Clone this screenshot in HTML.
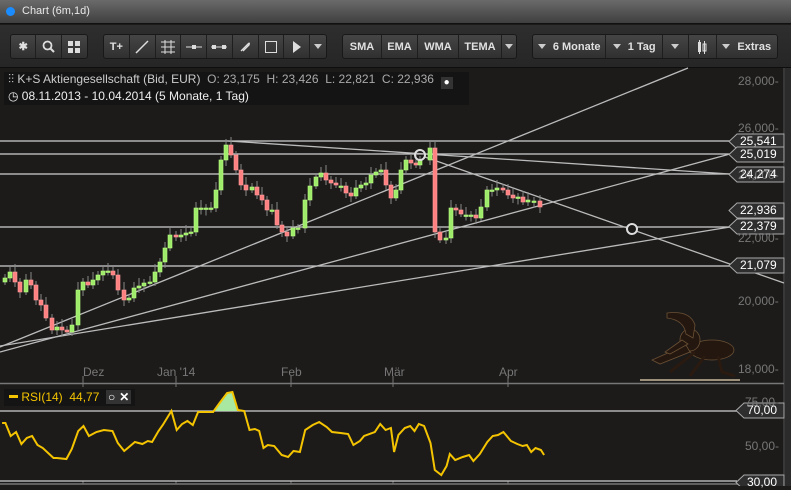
<!DOCTYPE html>
<html><head><meta charset="utf-8"><style>
*{margin:0;padding:0;box-sizing:border-box}
body{width:791px;height:486px;overflow:hidden;background:#1c1b1a;font-family:"Liberation Sans",Arial,sans-serif;position:relative}
#title{position:absolute;left:0;top:0;width:791px;height:24px;background:linear-gradient(#6a6a6a,#3f3f3f);border-bottom:1px solid #111}
#title .dot{position:absolute;left:6px;top:7px;width:9px;height:9px;border-radius:50%;background:#1a8cff}
#title .t{position:absolute;left:22px;top:5px;font-size:11px;color:#e8e8e8}
#tb{position:absolute;left:0;top:25px;width:791px;height:43px;background:linear-gradient(#2e2e2e,#262626);border-bottom:1px solid #0e0e0e}
.g{position:absolute;top:9px;height:25px;border:1px solid #181818;border-radius:3px;background:linear-gradient(#454545,#303030);display:flex}
.b{height:100%;border-right:1px solid #1e1e1e;color:#e0e0e0;font-size:11px;font-weight:bold;display:flex;align-items:center;justify-content:center}
.b:last-child{border-right:none}
.ar{display:inline-block;width:0;height:0;border-left:4px solid transparent;border-right:4px solid transparent;border-top:5px solid #ccc;margin-right:7px}
#info{position:absolute;left:4px;top:72px;height:33px;width:465px;background:#141414}
.l1{position:absolute;left:8px;top:72px;font-size:12px;color:#aaa;white-space:nowrap}
.l2{position:absolute;left:8px;top:89px;font-size:12px;color:#eee;white-space:nowrap}
.ax{position:absolute;font-size:12px;color:#777}
.lb{position:absolute;left:739px;width:46px;height:15px;color:#fff;font-size:12px;line-height:15px;padding-left:1px}
#rsil{position:absolute;left:4px;top:389px;width:131px;height:17px;background:#141414;font-size:12px;color:#f5c400;line-height:16px;padding-left:5px}
</style></head><body>
<div id="title"><div class="dot"></div><div class="t">Chart (6m,1d)</div></div>
<div id="tb">
 <div class="g" style="left:10px;width:78px">
  <div class="b" style="width:26px">✱</div>
  <div class="b" style="width:26px"><svg width="13" height="13"><circle cx="5.5" cy="5.5" r="4" stroke="#ddd" stroke-width="1.8" fill="none"/><line x1="8.5" y1="8.5" x2="12" y2="12" stroke="#ddd" stroke-width="2"/></svg></div>
  <div class="b" style="width:26px"><svg width="12" height="12"><rect x="0" y="0" width="5" height="5" fill="#ddd"/><rect x="7" y="0" width="5" height="5" fill="#ddd"/><rect x="0" y="7" width="5" height="5" fill="#ddd"/><rect x="7" y="7" width="5" height="5" fill="#ddd"/></svg></div>
 </div>
 <div class="g" style="left:103px;width:224px">
  <div class="b" style="width:26px">T+</div>
  <div class="b" style="width:26px"><svg width="14" height="14"><line x1="1" y1="13" x2="13" y2="1" stroke="#ddd" stroke-width="1.5"/></svg></div>
  <div class="b" style="width:26px"><svg width="14" height="14" stroke="#ddd"><line x1="0" y1="2" x2="14" y2="2"/><line x1="0" y1="7" x2="14" y2="7"/><line x1="0" y1="12" x2="14" y2="12"/><line x1="4" y1="0" x2="4" y2="14"/><line x1="10" y1="0" x2="10" y2="14"/></svg></div>
  <div class="b" style="width:26px"><svg width="16" height="6"><line x1="0" y1="3" x2="16" y2="3" stroke="#ddd"/><rect x="6" y="1" width="4" height="4" fill="#ddd"/></svg></div>
  <div class="b" style="width:26px"><svg width="16" height="6"><line x1="0" y1="3" x2="16" y2="3" stroke="#ddd"/><rect x="1" y="1" width="4" height="4" fill="#ddd"/><rect x="11" y="1" width="4" height="4" fill="#ddd"/></svg></div>
  <div class="b" style="width:26px"><svg width="12" height="12"><path d="M2 10 L9 3 Q11 1 10 4 L4 10" stroke="#ddd" fill="none" stroke-width="1.3"/></svg></div>
  <div class="b" style="width:26px"><svg width="12" height="12"><rect x="0.5" y="0.5" width="11" height="11" stroke="#ddd" fill="none"/></svg></div>
  <div class="b" style="width:26px"><svg width="8" height="12"><path d="M0 0 L8 6 L0 12Z" fill="#ddd"/></svg></div>
  <div class="b" style="width:16px"><span class="ar" style="margin:0"></span></div>
 </div>
 <div class="g" style="left:342px;width:175px">
  <div class="b" style="width:39px">SMA</div><div class="b" style="width:36px">EMA</div><div class="b" style="width:41px">WMA</div><div class="b" style="width:43px">TEMA</div><div class="b" style="width:14px"><span class="ar" style="margin:0"></span></div>
 </div>
 <div class="g" style="left:532px;width:246px">
  <div class="b" style="width:74px"><span class="ar"></span>6 Monate</div>
  <div class="b" style="width:57px"><span class="ar"></span>1 Tag</div>
  <div class="b" style="width:26px"><span class="ar" style="margin:0"></span></div>
  <div class="b" style="width:28px"><svg width="10" height="14" fill="#ddd"><rect x="1" y="2" width="3" height="10"/><line x1="2.5" y1="0" x2="2.5" y2="14" stroke="#ddd"/><rect x="6" y="4" width="3" height="7" fill="none" stroke="#ddd"/><line x1="7.5" y1="1" x2="7.5" y2="14" stroke="#ddd"/></svg></div>
  <div class="b" style="width:61px"><span class="ar"></span>Extras</div>
 </div>
</div>
<svg id="ch" width="791" height="486" style="position:absolute;left:0;top:0"></svg>
<div id="info"></div>
<div class="l1"><span style="color:#ccc">⫶⫶</span> <span style="color:#ccc">K+S Aktiengesellschaft (Bid, EUR)</span>&nbsp; O: 23,175&nbsp; H: 23,426&nbsp; L: 22,821&nbsp; C: 22,936 &nbsp;<span style="display:inline-block;width:12px;height:12px;background:#333;vertical-align:-2px;text-align:center;line-height:12px;color:#fff;font-size:10px">●</span></div>
<div class="l2">◷ 08.11.2013 - 10.04.2014 (5 Monate, 1 Tag)</div>
<div class="ax" style="left:738px;top:74px">28,000-</div>
<div class="ax" style="left:738px;top:121px">26,000-</div>
<div class="ax" style="left:738px;top:168px">24,000-</div>
<div class="ax" style="left:738px;top:231px">22,000-</div>
<div class="ax" style="left:738px;top:294px">20,000-</div>
<div class="ax" style="left:738px;top:362px">18,000-</div>
<div class="ax" style="left:745px;top:395px">75,00-</div>
<div class="ax" style="left:745px;top:439px">50,00-</div>
<div class="ax" style="left:83px;top:365px">Dez</div>
<div class="ax" style="left:157px;top:365px">Jan '14</div>
<div class="ax" style="left:281px;top:365px">Feb</div>
<div class="ax" style="left:384px;top:365px">Mär</div>
<div class="ax" style="left:499px;top:365px">Apr</div>
<div class="lb" style="top:134px">25,541</div>
<div class="lb" style="top:147px">25,019</div>
<div class="lb" style="top:167px">24,274</div>
<div class="lb" style="top:203px">22,936</div>
<div class="lb" style="top:219px">22,379</div>
<div class="lb" style="top:258px">21,079</div>
<div class="lb" style="top:403px;left:746px">70,00</div>
<div class="lb" style="top:475px;left:746px">30,00</div>
<div id="rsil"><span style="display:inline-block;width:9px;height:3px;background:#f5c400;vertical-align:3px"></span> RSI(14)&nbsp; 44,77 &nbsp;<span style="color:#fff;background:#333;padding:0 2px">○</span><span style="color:#fff;background:#333;padding:0 2px;font-weight:bold">✕</span></div>
<script>
var s='';
function L(a,b,c,d,col,w){s+='<line x1="'+a+'" y1="'+b+'" x2="'+c+'" y2="'+d+'" stroke="'+(col||'#ccc')+'" stroke-width="'+(w||1.2)+'"/>';}
s+='<rect x="785" y="68" width="6" height="418" fill="#2b2b2b"/>';
L(784,68,784,486,'#555',1);
L(0,383.5,784,383.5,'#777',1.5);
L(0,484,784,484,'#777',1.5);
[83,176,291,393,508].forEach(function(x){L(x,376,x,383,'#777',1);L(x,383,x,387,'#777',1);L(x,481,x,484,'#777',1);});
[141,154,174,227,266].forEach(function(y){L(0,y,730,y,'#d0d0d0',1.3);});
L(0,411,737,411,'#d0d0d0',1.3);L(0,481,737,481,'#d0d0d0',1.3);
L(0,347,688,68,'#bbb',1.3);
L(0,352,730,154,'#bbb',1.3);
L(0,346,730,227,'#bbb',1.3);
L(228,141,730,174,'#bbb',1.3);
L(425,157,784,283,'#bbb',1.3);
function LB(x0,y){s+='<polygon points="'+x0+','+(y+7.5)+' '+(x0+8)+','+y+' 784,'+y+' 784,'+(y+15)+' '+(x0+8)+','+(y+15)+'" fill="#2e2e2e" stroke="#aaa" stroke-width="1"/>';}
[134,147,167,203,219,258].forEach(function(y){LB(729,y);});
LB(736,403);LB(736,475);
var d=[[5,278],[10,272],[15,282],[20,292],[26,280],[31,285],[36,300],[41,305],[46,318],[52,330],[57,327],[62,330],[67,332],[72,325],[78,290],[83,282],[88,285],[93,280],[98,275],[103,271],[108,271],[113,275],[118,290],[124,300],[129,298],[134,288],[139,286],[144,283],[150,282],[155,272],[160,262],[165,248],[170,235],[176,237],[181,235],[186,233],[191,232],[196,208],[201,208],[206,208],[211,208],[216,190],[221,160],[226,145],[231,155],[236,170],[241,185],[246,190],[252,187],[257,195],[262,200],[267,210],[272,210],[277,225],[282,232],[287,236],[293,228],[298,228],[305,200],[310,186],[316,177],[321,173],[326,180],[331,183],[336,185],[341,186],[346,193],[351,196],[356,188],[361,185],[366,183],[371,175],[376,172],[381,170],[386,185],[391,198],[396,190],[401,170],[406,160],[411,163],[416,165],[420,160],[430,148],[435,232],[440,240],[446,238],[451,208],[456,210],[461,214],[466,215],[471,215],[476,218],[481,207],[487,190],[492,190],[497,188],[503,190],[508,195],[513,198],[518,197],[523,202],[528,200],[534,201],[540,207]];
for(var i=0;i<d.length;i++){var x=d[i][0],c=d[i][1],o=i?d[i-1][1]:c+4;if(Math.abs(o-c)<1.5)o=c+1.5;var t=Math.min(o,c),b=Math.max(o,c);var up=c<o;
L(x,t-4-(i%3)*2,x,b+3+(i%4),'#888',1);
s+='<rect x="'+(x-2)+'" y="'+t+'" width="4" height="'+(b-t)+'" fill="'+(up?'#9eea6a':'#ff8080')+'" stroke="'+(up?'#b8ff80':'#ff9a9a')+'" stroke-width="0.6"/>';}
s+='<circle cx="420" cy="155" r="5" fill="none" stroke="#ddd" stroke-width="2"/><circle cx="632" cy="229" r="5" fill="#1c1b1a" stroke="#ddd" stroke-width="2"/>';
s+='<g fill="#24170f" stroke="#6a5035" stroke-width="0.8"><ellipse cx="712" cy="350" rx="22" ry="10"/><ellipse cx="690" cy="340" rx="10" ry="11"/><path d="M667 313 Q690 310 695 325 L693 338 L686 334 Q684 320 667 318Z"/><path d="M686 345 L652 360 L660 364 L690 352Z"/><path d="M682 340 L665 352 L670 354 L688 344Z"/></g>';
s+='<g fill="none" stroke="#2a1a10" stroke-width="3"><path d="M695 352 L670 372 M705 356 L690 376 M718 356 L722 372 L735 376"/></g>';
L(640,380,740,380,'#c8b89a',1.5);
var r=[[2,423],[5,423],[10,436],[15,432],[20,444],[25,438],[30,436],[35,445],[40,448],[50,458],[53,458],[62,459],[67,449],[73,431],[78,426],[83,436],[90,432],[97,430],[105,431],[110,443],[116,451],[126,442],[133,444],[138,441],[142,442],[148,431],[152,425],[160,411],[165,430],[170,424],[175,421],[180,425],[185,412],[190,412],[199,412],[205,403],[212,393],[217,392],[222,410],[228,411],[233,430],[238,429],[242,431],[246,448],[250,445],[256,446],[263,455],[269,457],[274,451],[280,452],[285,430],[292,425],[298,422],[305,427],[310,432],[318,433],[325,434],[330,445],[336,441],[340,436],[350,432],[355,424],[360,430],[365,428],[368,452],[372,435],[378,428],[383,426],[387,431],[391,424],[396,426],[402,443],[406,470],[412,475],[417,466],[420,454],[425,460],[432,457],[438,455],[442,461],[448,454],[455,442],[460,436],[465,435],[470,432],[477,441],[483,444],[488,446],[492,445],[496,452],[500,448],[505,450],[508,455]];
var k=1.071;
s+='<path d="M'+(199*k)+' 411 L'+(205*k)+' 403 L'+(212*k)+' 393 L'+(217*k)+' 392 L'+(222*k)+' 411Z" fill="#a8e8a0"/>';
s+='<polyline points="'+r.map(function(p){return (p[0]*k).toFixed(1)+','+p[1]}).join(' ')+'" fill="none" stroke="#f5c400" stroke-width="2"/>';
document.getElementById('ch').innerHTML=s;
</script>
</body></html>
